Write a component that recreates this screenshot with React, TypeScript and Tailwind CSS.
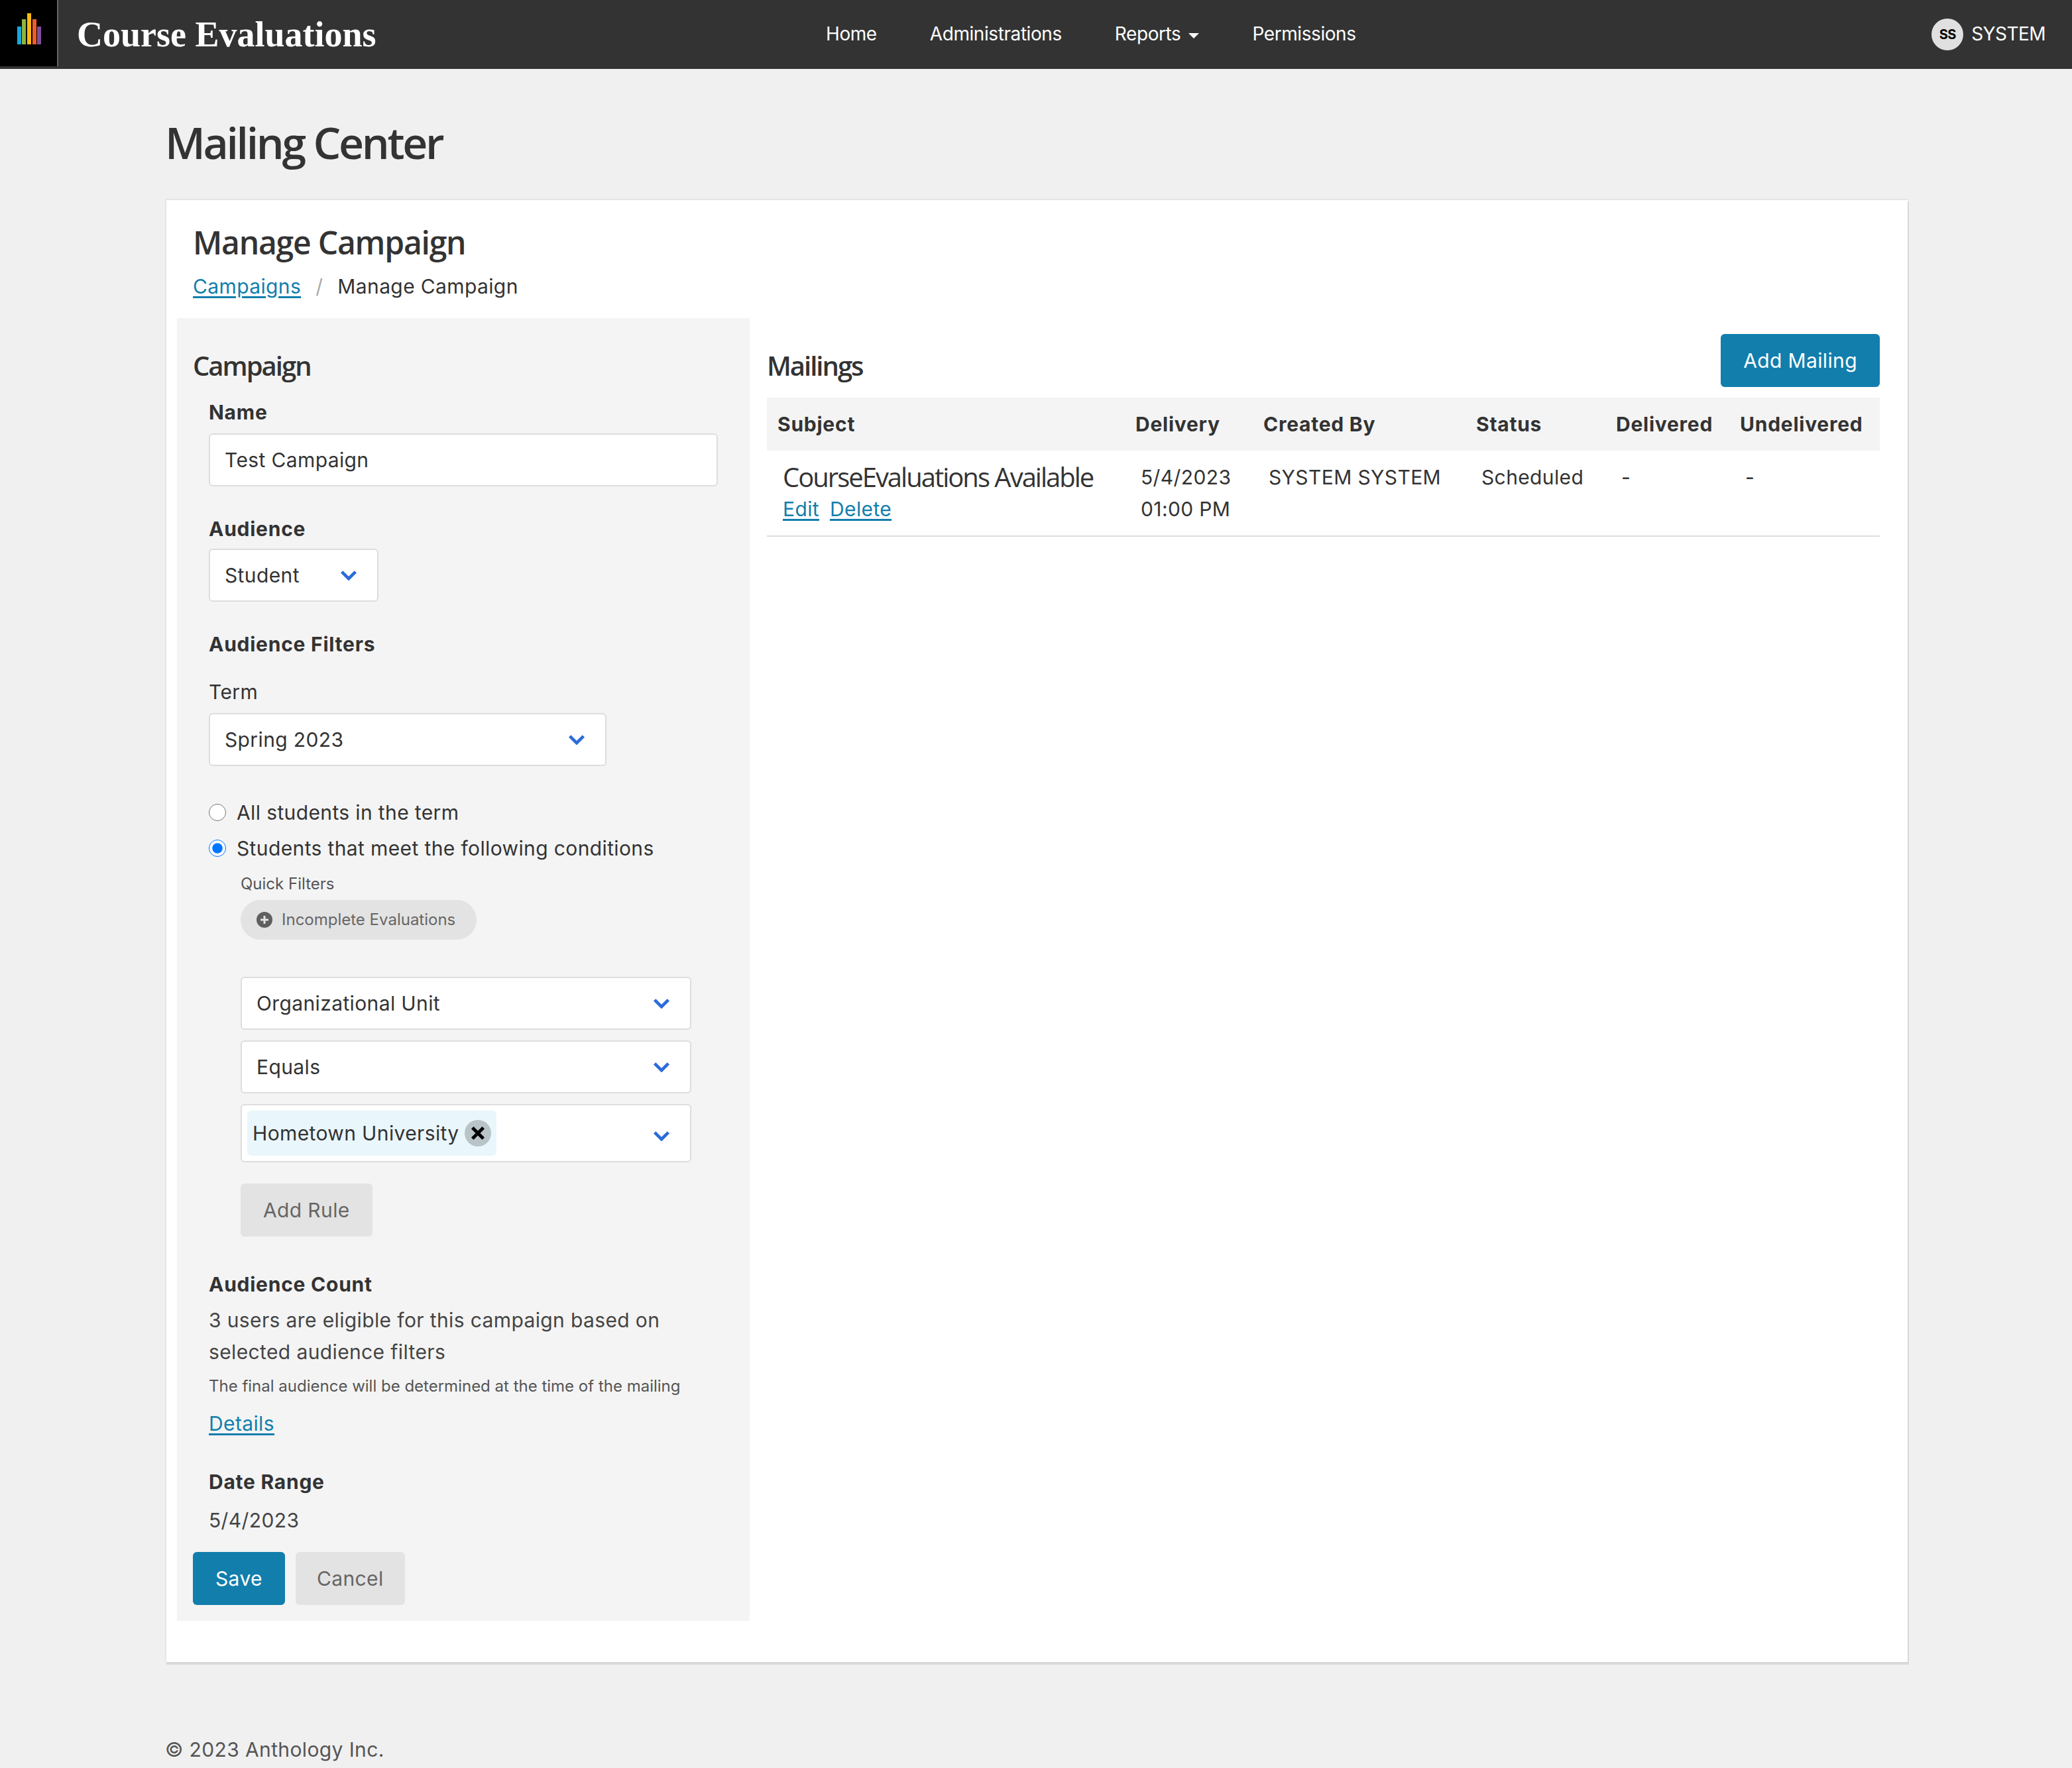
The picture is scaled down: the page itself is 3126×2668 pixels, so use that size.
import React from "react";

const Chevron = () => (
  <svg viewBox="0 0 26 17" className="h-4 w-6.5 shrink-0" fill="none" stroke="#2b6cd8" strokeWidth="5">
    <path d="M2 3 L13 14 L24 3" />
  </svg>
);

const Select = ({ label, className }: { label: string; className: string }) => (
  <div className={`flex h-20 items-center justify-between rounded-md border-2 border-[#dddddd] bg-white pl-5.5 pr-7.5 ${className}`}>
    <span>{label}</span>
    <Chevron />
  </div>
);

const Label = ({ children, className = "" }: { children: React.ReactNode; className?: string }) => (
  <div className={`font-bold leading-12 tracking-wide ${className}`}>{children}</div>
);

const Link = ({ children, className = "" }: { children: React.ReactNode; className?: string }) => (
  <a className={`text-[#127eac] underline underline-offset-4 ${className}`}>{children}</a>
);

const Logo = () => (
  <svg viewBox="0 0 86 100" className="h-25 w-21.5 shrink-0 bg-black">
    <rect x="26" y="40" width="6" height="27" fill="#1aa7e0" />
    <rect x="33" y="29" width="6" height="38" fill="#8cb63c" />
    <rect x="41" y="20" width="6" height="47" fill="#fdb913" />
    <rect x="49" y="29" width="6" height="38" fill="#f15a29" />
    <rect x="56" y="40" width="6" height="27" fill="#7f4f9f" />
  </svg>
);

const heading = "font-['Open_Sans',sans-serif]";

export default function App() {
  return (
    <div className="min-h-screen bg-[#f0f0f0] font-['Inter',sans-serif] text-3xl tracking-[0.0125em] text-[#333333]">
      <header className="flex h-26 items-start bg-[#333333] text-white">
        <div className="flex h-26 w-311.5 items-center">
          <div className="self-start border-r-2 border-[#666666]">
            <Logo />
          </div>
          <div className="ml-7 font-['Liberation_Serif',serif] text-[54px] font-bold tracking-normal">Course Evaluations</div>
        </div>
        <nav className="flex h-26 items-center gap-20 text-[28px] tracking-[-0.015em]">
          <a>Home</a>
          <a>Administrations</a>
          <a className="flex items-center gap-3">
            Reports
            <svg viewBox="0 0 16 8" className="mt-1 h-2 w-4 fill-white">
              <polygon points="0,0 16,0 8,8" />
            </svg>
          </a>
          <a>Permissions</a>
        </nav>
        <div className="ml-auto flex h-26 items-center gap-3 pr-10 text-[28px] tracking-[-0.02em]">
          <span className="flex size-12 items-center justify-center rounded-full bg-[#e0e0e0] text-xl font-bold text-black">SS</span>
          <span>SYSTEM</span>
        </div>
      </header>

      <main className="pl-[249px] pr-[248px] pt-17.5">
        <h1 className={`${heading} text-[66px] font-semibold leading-20 tracking-tighter`}>Mailing Center</h1>
        <section className="mt-11.5 border-l-2 border-t-2 border-[#e5e5e5] bg-white pb-15.5 shadow-[2px_4px_0_#d8d8d8]">
          <div className="pl-10 pt-10">
            <h2 className={`${heading} text-5xl font-semibold leading-12 tracking-tight`}>Manage Campaign</h2>
            <div className="mt-4.5 flex items-center leading-12">
              <Link>Campaigns</Link>
              <span className="mx-5.5 text-[#aaaaaa]">/</span>
              <span>Manage Campaign</span>
            </div>
          </div>
          <div className="mt-6 flex pl-4">
            <aside className="w-216 shrink-0 bg-[#f4f4f4] px-6 pb-6 pt-12">
              <h3 className={`${heading} text-[40px] font-semibold leading-12 tracking-tighter`}>Campaign</h3>
              <div className="pl-6 pr-6">
                <Label className="mt-5.5">Name</Label>
                <div className="mt-2 flex h-20 items-center rounded-md border-2 border-[#dddddd] bg-white px-5.5">Test Campaign</div>
                <Label className="mt-10">Audience</Label>
                <Select label="Student" className="mt-1.5 w-64" />
                <Label className="mt-10">Audience Filters</Label>
                <div className="mt-6 leading-12">Term</div>
                <Select label="Spring 2023" className="mt-2 w-150" />
                <label className="mt-11.5 flex h-12 items-center gap-4">
                  <input type="radio" name="audience" className="size-6.5" />
                  All students in the term
                </label>
                <label className="mt-1.5 flex h-12 items-center gap-4">
                  <input type="radio" name="audience" defaultChecked className="size-6.5" />
                  Students that meet the following conditions
                </label>
                <div className="ml-12 mr-10">
                  <div className="mt-3.5 text-2xl leading-8 tracking-normal text-[#555555]">Quick Filters</div>
                  <div className="mt-2 inline-flex h-15 items-center gap-3.5 rounded-full bg-[#e3e3e3] pl-6 pr-8 align-top text-2xl tracking-normal text-[#666666]">
                    <svg viewBox="0 0 24 24" className="size-6">
                      <circle cx="12" cy="12" r="12" fill="#5f5f5f" />
                      <path d="M12 6 V18 M6 12 H18" stroke="#e3e3e3" strokeWidth="3" />
                    </svg>
                    Incomplete Evaluations
                  </div>
                  <div className="mt-14 flex flex-col gap-4">
                    <Select label="Organizational Unit" className="" />
                    <Select label="Equals" className="" />
                    <div className="flex h-22 items-center justify-between rounded-md border-2 border-[#dddddd] bg-white pl-2 pr-7.5">
                      <div className="flex h-17 items-center gap-2 rounded-md bg-[#e9f6fc] pl-2 pr-2">
                        Hometown University
                        <span className="flex size-10 items-center justify-center rounded-full bg-[#b9c4c9]">
                          <svg viewBox="0 0 20 20" className="size-5.5" stroke="#000000" strokeWidth="4.5">
                            <path d="M2.5 2.5 L17.5 17.5 M17.5 2.5 L2.5 17.5" />
                          </svg>
                        </span>
                      </div>
                      <div className="mt-2">
                        <Chevron />
                      </div>
                    </div>
                  </div>
                  <button className="mt-8 h-20 rounded-md bg-[#e3e3e3] px-8.5 text-[#666666]">Add Rule</button>
                </div>
                <Label className="mt-12">Audience Count</Label>
                <p className="mt-1.5 leading-12 text-[#444444]">3 users are eligible for this campaign based on selected audience filters</p>
                <p className="mt-2 text-2xl leading-10 tracking-normal text-[#555555]">The final audience will be determined at the time of the mailing</p>
                <div className="mt-3 leading-12">
                  <Link>Details</Link>
                </div>
                <Label className="mt-10">Date Range</Label>
                <div className="mt-2.5 leading-12 text-[#444444]">5/4/2023</div>
              </div>
              <div className="mt-6 flex gap-4">
                <button className="h-20 rounded-md bg-[#127eac] px-8.5 text-white">Save</button>
                <button className="h-20 rounded-md bg-[#e3e3e3] px-8 text-[#666666]">Cancel</button>
              </div>
            </aside>

            <div className="min-w-0 flex-1 pl-6.5 pr-10.5 pt-6">
              <div className="flex items-start justify-between">
                <h3 className={`${heading} mt-6 text-[40px] font-semibold leading-12 tracking-tighter`}>Mailings</h3>
                <button className="h-20 rounded-md bg-[#127eac] px-8.5 text-white">Add Mailing</button>
              </div>
              <div className="mt-4 grid h-20 grid-cols-[540px_193px_321px_211px_187px_1fr] items-center bg-[#f4f4f4] font-bold tracking-wide">
                <div className="pl-4">Subject</div>
                <div className="pl-4">Delivery</div>
                <div className="pl-4">Created By</div>
                <div className="pl-4">Status</div>
                <div className="pl-4">Delivered</div>
                <div className="pl-4">Undelivered</div>
              </div>
              <div className="grid h-32.5 grid-cols-[540px_193px_321px_211px_187px_1fr] border-b-2 border-[#dddddd] pt-4 leading-12">
                <div className="pl-6">
                  <div className={`${heading} text-[40px] tracking-tighter`}>CourseEvaluations Available</div>
                  <div className="flex gap-4">
                    <Link>Edit</Link>
                    <Link>Delete</Link>
                  </div>
                </div>
                <div className="pl-6">
                  5/4/2023
                  <br />
                  01:00 PM
                </div>
                <div className="pl-6">SYSTEM SYSTEM</div>
                <div className="pl-6">Scheduled</div>
                <div className="pl-6">-</div>
                <div className="pl-6">-</div>
              </div>
            </div>
          </div>
        </section>
        <footer className="mt-27 pt-1 leading-10 text-[#555555]">© 2023 Anthology Inc.</footer>
      </main>
    </div>
  );
}
